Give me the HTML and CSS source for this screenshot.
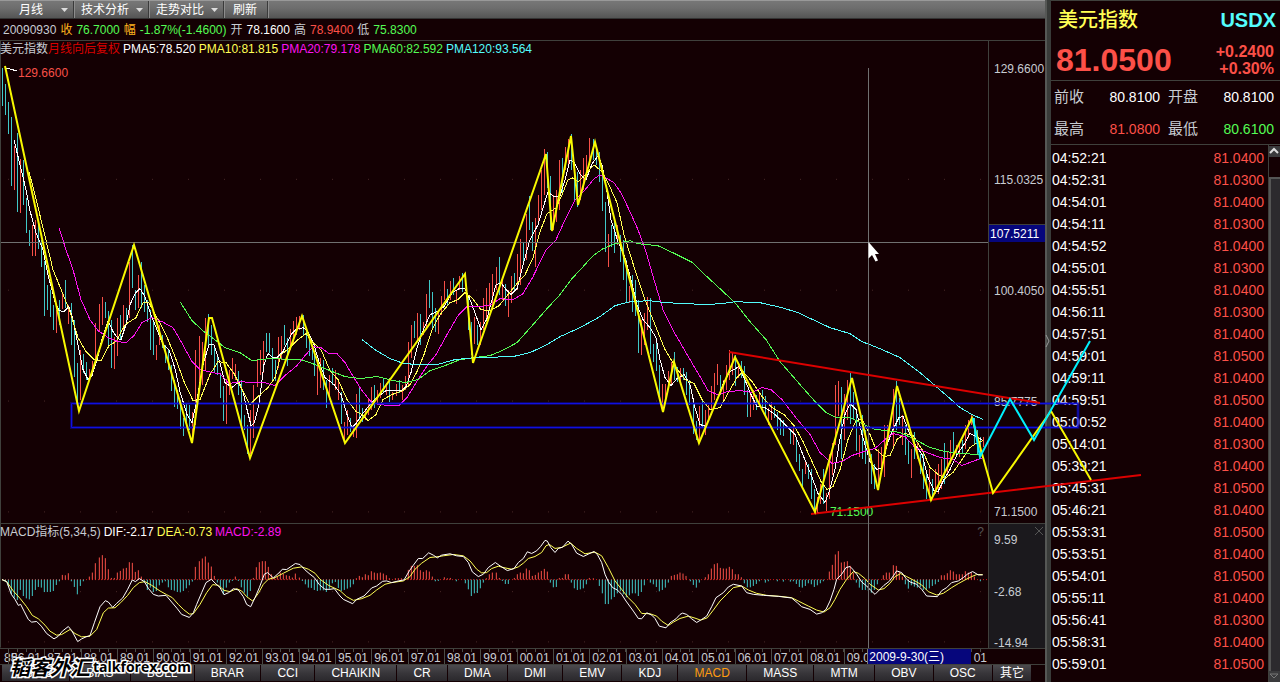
FILE: index.html
```html
<!DOCTYPE html>
<html lang="zh-CN">
<head>
<meta charset="utf-8">
<title>美元指数 USDX</title>
<link rel="stylesheet" href="styles.css">
</head>
<body>
<div class="app">
  <main class="main">
    <nav class="toolbar">
      <button class="tool tool-period" type="button">月线<svg class="caret" viewBox="0 0 7 4"><path d="M0 0H7L3.500 4Z"/></svg></button>
      <button class="tool" type="button">技术分析<svg class="caret" viewBox="0 0 7 4"><path d="M0 0H7L3.500 4Z"/></svg></button>
      <button class="tool" type="button">走势对比<svg class="caret" viewBox="0 0 7 4"><path d="M0 0H7L3.500 4Z"/></svg></button>
      <button class="tool" type="button">刷新</button>
    </nav>
    <div class="info">
      <span class="silver">20090930</span><span class="gold">收</span><span class="green">76.7000</span><span class="gold">幅</span><span class="green">-1.87%(-1.4600)</span><span class="silver">开</span><span class="white">78.1600</span><span class="silver">高</span><span class="red">78.9400</span><span class="silver">低</span><span class="green">75.8300</span>
    </div>
    <section class="pane price-pane">
      <div class="plot">
        <svg class="canvas" viewBox="0 41 988 483" preserveAspectRatio="none">
          <g class="dots"><path d="M8 179.500H988M8 290.500H988M8 401.500H988M8 512.500H988"/></g>
          <path class="edge" d="M.5 41V524"/>
          <path class="bar down" d="M2.500 68V106M5.500 84V115M8.500 102V134M11.500 117V186M17.500 133V212M23.500 160V205M26.500 198V233M29.500 230V246M38.500 225V249M41.500 240V267M44.500 261V316M47.500 285V310M50.500 290V317M53.500 305V330M59.500 300V325M65.500 280V308M71.500 303V345M74.500 320V377M77.500 363V402M83.500 354V373M86.500 362V380M105.500 302V318M108.500 311V348M111.500 320V368M120.500 315V340M126.500 308V325M132.500 245V288M135.500 290V310M141.500 262V308M144.500 285V312M147.500 300V322M150.500 310V350M153.500 320V355M162.500 335V348M165.500 345V363M168.500 350V370M171.500 365V391M174.500 380V407M177.500 390V409M180.500 400V429M183.500 418V436M186.500 403V422M189.500 405V430M208.500 314V345M211.500 325V355M214.500 345V372M217.500 354V375M220.500 375V398M223.500 386V421M238.500 371V395M241.500 380V425M244.500 415V430M247.500 425V455M266.500 333V352M269.500 333V353M272.500 348V380M275.500 360V381M284.500 325V345M287.500 338V366M303.500 315V335M306.500 330V348M309.500 335V356M312.500 348V360M314.500 353V376M323.500 360V390M326.500 380V408M332.500 368V385M341.500 392V424M350.500 418V432M359.500 388V420M362.500 408V422M374.500 385V408M383.500 378V392M389.500 378V402M399.500 380V393M414.500 321V338M420.500 314V345M429.500 280V308M432.500 292V330M435.500 308V332M447.500 289V305M453.500 278V295M462.500 273V292M468.500 295V330M471.500 322V355M477.500 325V345M499.500 257V295M505.500 284V306M514.500 273V290M523.500 243V265M529.500 196V230M532.500 222V251M547.500 152V188M550.500 176V230M562.500 158V195M571.500 134V170M574.500 163V200M577.500 172V207M593.500 139V160M596.500 148V165M599.500 152V182M602.500 165V211M605.500 202V252M611.500 225V247M614.500 222V253M620.500 235V262M623.500 240V280M626.500 260V303M632.500 275V312M635.500 280V316M638.500 300V353M650.500 298V354M653.500 344V362M656.500 338V371M659.500 365V398M674.500 352V380M677.500 367V382M683.500 368V380M686.500 372V395M689.500 380V405M693.500 400V434M696.500 421V440M702.500 400V428M720.500 375V395M735.500 355V386M741.500 361V378M744.500 366V395M747.500 390V417M756.500 395V410M762.500 390V408M765.500 396V415M774.500 406V418M777.500 412V430M780.500 418V435M783.500 420V436M790.500 430V444M796.500 440V463M799.500 455V472M802.500 470V488M808.500 465V480M811.500 470V500M814.500 490V512M823.500 470V505M841.500 387V460M850.500 373V424M853.500 392V420M856.500 410V452M862.500 415V460M865.500 430V465M871.500 455V485M874.500 465V490M896.500 381V430M899.500 398V425M905.500 425V456M908.500 440V465M914.500 432V460M920.500 455V475M923.500 455V490M926.500 473V500M932.500 480V497M944.500 443V485M953.500 432V455M962.500 440V455M974.500 418V445M977.500 430V455M980.500 437V455"/>
          <path class="bar up" d="M14.500 146V190M20.500 159V213M32.500 225V256M35.500 220V256M56.500 310V333M62.500 292V309M68.500 305V324M80.500 350V400M89.500 369V378M92.500 361V372M95.500 323V365M99.500 304V331M102.500 297V325M114.500 337V369M117.500 318V356M123.500 305V333M129.500 262V318M138.500 275V308M156.500 345V360M159.500 325V345M192.500 412V440M195.500 350V425M199.500 336V390M202.500 342V385M205.500 318V370M226.500 379V424M229.500 370V395M232.500 358V379M235.500 364V380M250.500 410V455M253.500 385V438M257.500 360V387M260.500 350V375M263.500 341V373M278.500 337V368M281.500 336V360M290.500 329V350M293.500 321V345M296.500 317V335M299.500 316V330M317.500 360V395M320.500 358V388M329.500 375V400M335.500 370V390M338.500 382V400M344.500 422V440M347.500 410V435M353.500 425V437M356.500 394V438M365.500 410V420M368.500 398V415M371.500 387V410M377.500 390V405M380.500 383V398M386.500 383V395M392.500 392V400M396.500 384V396M402.500 385V400M405.500 376V390M408.500 342V385M411.500 325V358M417.500 313V340M423.500 322V335M426.500 294V330M438.500 310V334M441.500 296V315M444.500 281V300M450.500 281V300M456.500 290V304M459.500 276V290M474.500 317V344M480.500 322V345M483.500 298V330M486.500 288V320M489.500 283V310M492.500 274V305M496.500 267V290M502.500 280V300M508.500 290V317M511.500 276V303M517.500 254V290M520.500 239V285M526.500 214V260M535.500 218V267M538.500 195V225M541.500 170V210M544.500 149V195M553.500 195V230M556.500 190V222M559.500 160V210M565.500 147V170M568.500 139V165M580.500 170V200M583.500 158V190M586.500 155V180M589.500 138V165M608.500 234V267M617.500 225V245M629.500 286V303M641.500 320V355M644.500 313V345M647.500 297V330M662.500 384V410M665.500 384V400M668.500 371V388M671.500 362V385M680.500 368V385M699.500 406V440M705.500 410V435M708.500 405V420M711.500 386V410M714.500 373V400M717.500 364V385M723.500 380V400M726.500 365V390M729.500 350V380M732.500 353V375M738.500 365V378M750.500 392V417M753.500 390V410M759.500 394V405M768.500 408V425M771.500 402V420M793.500 425V445M805.500 462V475M817.500 498V515M820.500 485V505M826.500 494V512M829.500 455V500M832.500 443V476M835.500 385V445M838.500 381V416M844.500 394V440M847.500 380V420M859.500 435V458M878.500 450V485M881.500 448V470M884.500 425V478M887.500 425V446M893.500 389V450M902.500 415V445M911.500 450V479M917.500 443V460M929.500 470V498M935.500 470V495M938.500 465V495M941.500 460V490M947.500 452V475M950.500 440V465M956.500 445V458M959.500 443V458M965.500 425V450M968.500 420V438M971.500 415V425M983.500 437V448"/>
          <polyline class="line s-white" points="14,140 20,165 26,190 30,211 36,233 43,250 48,275 55,302 59,311 64,312 69,307 73,320 79,350 83,370 88,380 92,376 97,360 103,336 108,321 113,332 118,339 121,340 126,325 130,305 135,294 140,289 145,297 151,315 157,330 163,345 169,350 175,369 180,392 187,415 192,423 197,400 203,365 209,345 214,345 219,360 225,383 232,388 239,382 243,392 247,410 251,426 254,424 259,405 264,365 268,354 273,358 277,358 283,352 291,335 296,330 303,328 307,331 313,342 319,362 325,378 334,385 341,395 347,415 352,428 356,424 362,415 370,405 378,397 386,391 395,391 402,391 406,387 411,373 417,348 423,331 430,315 437,312 444,307 452,293 459,289 465,289 470,300 476,316 481,330 487,319 492,300 496,285 501,283 506,290 511,295 517,289 523,265 530,240 538,225 544,205 548,192 554,197 560,196 565,180 570,160 574,162 580,174 586,180 592,164 598,156 602,165 606,185 611,220 618,242 625,258 631,280 637,305 643,320 650,328 656,338 660,360 665,378 671,386 677,379 684,375 690,385 695,408 700,425 706,427 711,415 717,400 724,382 730,372 739,367 744,378 751,395 757,407 765,408 775,415 785,425 795,435 802,453 811,475 818,494 825,503 830,490 835,470 839,445 845,415 850,404 856,410 862,435 870,462 877,470 882,468 887,445 893,430 899,418 903,417 908,430 915,445 922,455 928,478 934,491 938,492 944,480 950,470 957,455 964,445 970,434 976,437 983,441"/>
          <polyline class="line s-yellow" points="29,172 35,195 43,228 53,270 62,292 70,312 78,338 86,352 94,360 101,361 109,346 116,342 125,325 136,318 143,303 149,303 157,318 166,335 175,357 184,382 193,401 200,400 210,375 218,362 226,363 234,374 241,388 250,405 258,397 268,388 275,378 281,355 290,348 298,340 306,334 313,343 321,350 330,371 338,380 347,400 356,412 362,415 368,421 376,415 383,400 392,395 403,391 410,385 417,372 424,355 432,330 440,315 450,303 458,300 465,293 472,298 481,310 490,311 499,306 508,295 516,285 525,275 533,258 540,232 547,214 556,208 562,195 568,180 573,178 578,182 585,175 594,165 602,172 609,185 617,203 624,235 634,267 645,300 655,325 665,350 674,365 685,380 694,384 702,400 710,410 720,408 729,392 737,378 743,372 752,382 762,397 772,408 784,415 794,426 803,442 812,462 821,482 827,490 833,487 840,470 848,440 856,421 862,420 870,435 876,450 884,457 890,456 897,440 905,434 913,436 922,450 930,468 938,475 945,479 953,473 962,460 970,448 976,444 983,441"/>
          <polyline class="line s-magenta" points="59,228 66,250 73,270 81,300 90,320 98,331 108,338 118,342 126,343 134,336 142,323 152,318 162,322 173,328 180,340 192,362 200,370 212,373 220,374 229,384 240,382 252,383 264,383 275,386 285,376 297,366 305,356 313,347 321,348 329,354 337,354 345,363 352,375 362,391 371,402 379,405 390,406 399,406 407,398 418,380 428,365 436,355 447,335 458,316 467,307 480,307 491,305 500,299 513,300 523,294 533,277 546,250 556,240 565,220 575,200 585,190 594,179 600,175 606,178 614,183 621,193 630,212 638,230 646,252 654,280 663,310 675,334 690,360 700,377 708,391 717,395 728,392 741,391 752,393 762,388 771,390 782,400 795,417 810,435 820,453 832,464 842,462 852,456 864,452 875,449 885,440 893,434 905,437 915,448 927,453 940,458 953,460 962,466 970,463 983,458"/>
          <polyline class="line s-green" points="180,302 192,321 204,332 216,341 225,348 240,353 252,361 270,359 300,360 310,363 330,371 345,377 360,379 377,377 393,381 405,383 418,380 430,371 445,366 460,360 475,358 490,356 502,351 517,343 533,325 547,309 560,295 571,280 583,267 593,256 603,249 615,244 630,241 638,244 658,246 675,254 693,263 707,277 720,289 735,303 750,322 766,340 780,362 800,385 815,402 826,413 836,418 850,418 862,424 875,430 887,431 900,433 915,440 930,448 945,452 960,454 980,455"/>
          <polyline class="line s-cyan" points="362,340 375,350 390,359 404,364 420,365 437,365 455,360 475,358 513,357 530,353 545,346 560,337 580,328 600,317 615,306 630,302 650,301 665,303 690,304 702,305 722,304 735,302 760,303 782,308 798,313 815,321 830,328 850,334 862,342 880,349 900,358 920,373 935,386 950,399 960,408 972,415 983,420"/>
          <path class="line s-white" d="M6 68L17 71M817 513L827 513"/>
        </svg>
        <header class="legend">
          <span class="silver">美元指数<span class="crimson">月线向后复权</span></span><span class="white">PMA5:78.520</span><span class="yellow">PMA10:81.815</span><span class="magenta">PMA20:79.178</span><span class="green">PMA60:82.592</span><span class="cyan">PMA120:93.564</span>
        </header>
        <span class="mark mark-high">129.6600</span>
        <span class="mark mark-low">71.1500</span>
      </div>
      <div class="scale price-scale">
        <span>129.6600</span><span>115.0325</span><span>100.4050</span><span>85.7775</span><span>71.1500</span>
        <span class="scale-tag">107.5211</span>
      </div>
    </section>
    <section class="pane macd-pane">
      <div class="plot">
        <svg class="canvas" viewBox="0 15 2964 369" preserveAspectRatio="none">
          <g class="dots"><path d="M24 217H2964M24 367H2964"/></g>
          <path class="edge" d="M1.500 15V384"/>
          <path class="zero" d="M6 181H2964"/>
          <path class="bar down" d="M16 181V187M25 181V200M34 181V225M43 181V235M52 181V242M61 181V212M70 181V230M79 181V237M88 181V240M97 181V230M106 181V212M115 181V203M124 181V205M133 181V218M142 181V218M151 181V218M160 181V215M169 181V197M178 181V186M214 181V186M223 181V203M232 181V225M241 181V200M250 181V186M433 181V190M442 181V212M451 181V205M460 181V218M469 181V215M478 181V198M487 181V190M496 181V186M505 181V204M514 181V212M523 181V214M532 181V218M541 181V219M550 181V215M559 181V207M568 181V198M577 181V187M652 181V190M661 181V203M670 181V225M679 181V205M688 181V190M697 181V185M715 181V185M724 181V204M733 181V220M742 181V232M751 181V215M907 181V185M916 181V195M925 181V205M934 181V206M943 181V212M952 181V215M961 181V213M970 181V213M979 181V218M988 181V208M997 181V192M1006 181V188M1015 181V206"/>
          <path class="bar up" d="M187 181V167M196 181V168M205 181V162M268 181V172M277 181V160M286 181V132M298 181V115M307 181V108M316 181V117M325 181V150M334 181V176M343 181V176M352 181V160M361 181V155M370 181V148M379 181V146M388 181V129M397 181V131M406 181V158M415 181V153M424 181V172M586 181V143M598 181V126M607 181V118M616 181V112M625 181V130M634 181V142M643 181V170M706 181V172M760 181V176M769 181V144M778 181V129M787 181V126M796 181V126M805 181V143M814 181V165M823 181V176M832 181V172M841 181V160M850 181V164M859 181V168M868 181V170M877 181V175M886 181V163M898 181V175"/>
          <polyline class="line s-yellow" points="6,181 20,187 40,215 60,237 80,262 97,288 115,298 135,317 150,335 170,347 185,345 210,330 225,342 245,352 270,350 290,330 310,280 325,266 345,265 362,250 383,228 400,205 418,190 435,187 455,198 480,215 500,226 517,235 535,255 550,270 568,284 580,283 600,255 620,220 638,196 655,198 672,213 690,217 710,208 725,215 740,232 758,245 775,222 790,195 805,180 825,175 850,162 880,147 905,143 925,150 945,162 960,180 985,198 1020,214"/>
          <polyline class="line s-white" points="6,181 20,187 34,225 45,240 55,258 62,255 72,275 85,300 95,308 110,306 124,320 140,342 162,358 175,350 187,335 205,321 215,333 233,366 245,358 258,352 270,348 283,310 300,262 316,244 325,248 338,264 350,252 368,236 383,210 397,182 406,187 418,178 433,187 445,207 460,225 475,230 498,228 515,248 532,268 545,285 568,294 580,280 590,255 605,220 618,190 634,180 648,194 660,205 672,226 686,220 700,208 715,212 730,232 740,255 752,262 765,235 778,205 793,165 803,160 820,176 840,158 847,150 860,151 886,133 900,136 915,152 930,165 943,175 958,196 975,210 990,210 1003,208 1020,230"/>
          <g transform="translate(1020 0)">
            <path class="bar down" d="M4 181V215M13 181V212M22 181V208M31 181V204M40 181V195M286 181V186M295 181V185M349 181V186M376 181V192M385 181V210M394 181V230M403 181V222M412 181V221M421 181V207M430 181V190M487 181V185M496 181V194M505 181V194M631 181V190M640 181V204M649 181V203M694 181V190M703 181V207M712 181V212M721 181V210M730 181V207M739 181V195M778 181V200M787 181V222M796 181V254M805 181V254M814 181V240M823 181V233M832 181V222M841 181V215M850 181V225M859 181V234M868 181V228M877 181V222M886 181V222M895 181V230M904 181V218M913 181V198M931 181V190M940 181V195M949 181V203M958 181V216M967 181V212M976 181V205M985 181V190"/>
            <path class="bar up" d="M49 181V177M58 181V170M67 181V174M76 181V165M85 181V168M94 181V156M103 181V160M112 181V162M121 181V160M130 181V163M139 181V168M148 181V177M166 181V177M175 181V177M184 181V177M205 181V152M214 181V140M223 181V140M232 181V138M241 181V153M250 181V158M259 181V153M268 181V157M277 181V172M313 181V174M322 181V177M331 181V176M439 181V177M448 181V165M457 181V160M469 181V160M478 181V176M523 181V176M532 181V165M541 181V160M550 181V162M559 181V148M568 181V153M577 181V170M586 181V167M595 181V160M604 181V155M613 181V149M622 181V157M658 181V176M667 181V176M676 181V165M685 181V165M748 181V176M760 181V177M994 181V170M1003 181V167M1012 181V165"/>
            <polyline class="line s-yellow" points="0,214 20,232 40,243 65,238 90,228 110,212 135,195 155,190 190,185 210,172 225,150 245,132 270,115 290,113 310,110 340,106 370,110 390,125 410,150 425,161 440,160 455,148 475,141 495,146 515,150 535,143 550,132 565,118 585,112 605,100 618,80 628,76 645,88 665,85 692,72 710,88 735,104 765,99 785,110 805,145 825,185 845,210 865,235 885,255 905,282 930,283 950,290 965,305 985,318 1000,308 1020,297"/>
            <polyline class="line s-white" points="0,230 10,240 38,253 50,240 72,230 95,206 110,200 128,186 140,185 155,190 175,185 192,182 208,155 220,138 235,118 248,118 266,101 280,108 292,116 305,108 330,104 350,110 370,112 385,130 397,158 415,172 430,165 445,145 466,130 480,140 502,154 522,148 535,130 550,118 562,98 575,103 590,95 602,82 615,64 622,66 632,85 645,100 655,88 668,84 684,66 695,76 710,102 730,112 745,105 762,97 772,106 785,130 795,165 805,187 818,205 832,212 845,225 858,245 880,275 895,297 905,298 920,280 935,287 945,297 958,320 978,325 990,310 1008,298 1020,285"/>
          </g>
          <g transform="translate(2040 0)">
            <path class="bar down" d="M31 181V186M40 181V197M49 181V205M58 181V190M193 181V192M202 181V204M211 181V204M220 181V200M229 181V194M238 181V186M256 181V190M265 181V186M292 181V186M310 181V187M331 181V187M340 181V186M349 181V194M358 181V203M367 181V205M376 181V200M385 181V192M394 181V195M403 181V203M412 181V198M421 181V192M430 181V186M529 181V190M538 181V205M547 181V212M556 181V212M565 181V215M574 181V220M583 181V212M592 181V195M676 181V195M685 181V208M694 181V198M703 181V202M712 181V205M721 181V203M730 181V212M739 181V212M748 181V207M757 181V200M766 181V195M775 181V188M901 181V186"/>
            <path class="bar up" d="M0 181V160M9 181V163M18 181V170M76 181V174M85 181V165M94 181V148M103 181V135M112 181V132M121 181V146M130 181V148M139 181V148M148 181V143M157 181V150M166 181V165M175 181V165M184 181V174M448 181V157M457 181V137M466 181V106M475 181V96M484 181V130M493 181V128M502 181V126M511 181V140M520 181V160M610 181V168M619 181V160M628 181V160M640 181V138M649 181V140M658 181V158M667 181V172M784 181V168M793 181V168M802 181V162M811 181V153M820 181V157M829 181V165M838 181V165M847 181V165M856 181V156M865 181V160M874 181V160M883 181V172"/>
            <polyline class="line s-yellow" points="0,297 25,290 45,296 62,302 82,295 100,272 120,245 140,225 160,205 185,200 205,212 230,222 260,228 300,231 335,235 355,245 385,260 410,272 432,278 450,265 465,240 480,210 500,180 520,157 535,162 555,178 570,195 595,212 612,208 630,192 645,172 662,163 680,172 705,185 725,197 745,217 770,227 790,222 815,205 835,193 855,182 875,172 890,166 908,166"/>
            <polyline class="line s-white" points="0,285 8,281 20,285 35,298 50,309 65,300 80,290 95,262 108,235 130,220 145,203 160,195 185,200 200,220 220,225 250,228 295,231 335,236 352,250 365,262 390,270 410,284 425,280 438,270 450,245 462,210 470,180 485,165 498,145 510,142 518,150 530,165 545,188 560,200 572,213 585,225 598,212 612,198 628,186 640,170 650,155 665,160 680,180 690,188 710,195 725,210 740,230 772,232 785,214 800,205 815,190 835,185 850,175 862,165 878,157 895,167 908,167"/>
          </g>
        </svg>
        <header class="legend">
          <span class="silver">MACD指标(5,34,5)</span><span class="white">DIF:-2.17</span><span class="yellow">DEA:-0.73</span><span class="magenta">MACD:-2.89</span>
          <button class="help" type="button">?</button>
        </header>
      </div>
      <div class="scale macd-scale">
        <span>9.59</span><span>-2.68</span><span>-14.94</span>
        <button class="close" type="button" aria-label="关闭"><svg viewBox="0 0 8 8"><path d="M0 0L8 8M8 0L0 8"/></svg></button>
      </div>
    </section>
    <div class="dates">
      <span class="date-edge">85</span>
      <div class="years">
        <span>86.01</span><span>87.01</span><span>88.01</span><span>89.01</span><span>90.01</span><span>91.01</span><span>92.01</span><span>93.01</span><span>94.01</span><span>95.01</span><span>96.01</span><span>97.01</span><span>98.01</span><span>99.01</span><span>00.01</span><span>01.01</span><span>02.01</span><span>03.01</span><span>04.01</span><span>05.01</span><span>06.01</span><span>07.01</span><span>08.01</span><span>09.0</span><span></span><span></span><span class="year-end">01</span>
      </div>
      <span class="date-tag">2009-9-30(三)</span>
    </div>
    <nav class="tabs">
      <button type="button">B3612</button><button type="button">BIAS</button><button type="button">BOLL</button><button type="button">BRAR</button><button type="button">CCI</button><button type="button">CHAIKIN</button><button type="button">CR</button><button type="button">DMA</button><button type="button">DMI</button><button type="button">EMV</button><button type="button">KDJ</button><button type="button" class="active">MACD</button><button type="button">MASS</button><button type="button">MTM</button><button type="button">OBV</button><button type="button">OSC</button><button type="button" class="more">其它</button>
    </nav>
  </main>
  <div class="splitter"><svg viewBox="0 0 5 12"><path d="M1 0L4 6L1 12"/></svg></div>
  <aside class="quote">
    <header class="quote-head">
      <h1>美元指数</h1><span class="code">USDX</span>
    </header>
    <div class="last">
      <strong>81.0500</strong>
      <div class="change"><span>+0.2400</span><span>+0.30%</span></div>
    </div>
    <dl class="facts">
      <dt>前收</dt><dd class="white">80.8100</dd><dt>开盘</dt><dd class="white">80.8100</dd>
      <dt>最高</dt><dd class="red">81.0800</dd><dt>最低</dt><dd class="green">80.6100</dd>
    </dl>
    <div class="ticks">
      <table>
        <tbody>
          <tr><td>04:52:21</td><td>81.0400</td></tr>
          <tr><td>04:52:31</td><td>81.0300</td></tr>
          <tr><td>04:54:01</td><td>81.0400</td></tr>
          <tr><td>04:54:11</td><td>81.0300</td></tr>
          <tr><td>04:54:52</td><td>81.0400</td></tr>
          <tr><td>04:55:01</td><td>81.0300</td></tr>
          <tr><td>04:55:51</td><td>81.0400</td></tr>
          <tr><td>04:56:11</td><td>81.0300</td></tr>
          <tr><td>04:57:51</td><td>81.0400</td></tr>
          <tr><td>04:59:01</td><td>81.0500</td></tr>
          <tr><td>04:59:11</td><td>81.0400</td></tr>
          <tr><td>04:59:51</td><td>81.0500</td></tr>
          <tr><td>05:00:52</td><td>81.0400</td></tr>
          <tr><td>05:14:01</td><td>81.0300</td></tr>
          <tr><td>05:39:21</td><td>81.0400</td></tr>
          <tr><td>05:45:31</td><td>81.0500</td></tr>
          <tr><td>05:46:21</td><td>81.0400</td></tr>
          <tr><td>05:53:31</td><td>81.0500</td></tr>
          <tr><td>05:53:51</td><td>81.0400</td></tr>
          <tr><td>05:54:01</td><td>81.0500</td></tr>
          <tr><td>05:55:11</td><td>81.0400</td></tr>
          <tr><td>05:56:41</td><td>81.0300</td></tr>
          <tr><td>05:58:31</td><td>81.0400</td></tr>
          <tr><td>05:59:01</td><td>81.0500</td></tr>
        </tbody>
      </table>
      <div class="scrollbar">
        <button type="button" aria-label="向上"><svg viewBox="0 0 10 10"><path d="M1 7L5 3L9 7"/></svg></button>
        <div class="thumb"></div>
        <button type="button" class="dim" aria-label="向下"><svg viewBox="0 0 10 10"><path d="M1 3L5 7L9 3Z"/></svg></button>
      </div>
    </div>
  </aside>
  <svg class="overlay" viewBox="0 0 1280 682" preserveAspectRatio="none">
    <path class="cross" d="M1 242.500H988M868.500 68V648"/>
    <path class="band-glow" d="M71.500 403.500H1078V427.500H71.500Z"/>
    <path class="band" d="M71.500 403.500H1078V427.500H71.500Z"/>
    <path class="trend" d="M729 352L1040 403M811 514L1141 475"/>
    <polyline class="wave" points="5,66 79,411 134,245 192,443 209,318 212,318 250,458 302,316 345,443 465,274 473,363 546,154 552,231 571,136 578,205 595,142 663,412 674,362 699,443 735,357 815,512 852,378 878,490 897,386 931,500 972,418 993,493 1051,411 1091,480"/>
    <polyline class="wave forecast" points="973,418 980,457 1010,399 1034,440 1090,341"/>
    <path class="pointer" d="M868.500 242V258.500L872 255L875.500 261.500L878 260.500L875 254H879Z"/>
  </svg>
  <div class="watermark"><span class="wm-name">韬客外汇</span><span class="wm-site">talkforex.com</span></div>
</div>
</body>
</html>
```
FILE: styles.css
```css
* { box-sizing: border-box; margin: 0; padding: 0; }

body {
  background: #140003;
  color: #c8ccd2;
  font: 12px/16px "Liberation Sans", Arial, "Noto Sans CJK SC", sans-serif;
}

button { border: 0; background: none; color: inherit; font: inherit; }

.silver { color: #c8ccd2; }
.white { color: #fff; }
.gold { color: #ffb41e; }
.green { color: #54fc54; }
.red { color: #fc5048; }
.crimson { color: #d80000; }
.yellow { color: #ffff54; }
.magenta { color: #fc14f0; }
.cyan { color: #54fcfc; }

.app { position: relative; display: flex; height: 100vh; overflow: hidden; }
.main { flex: 1; min-width: 0; display: flex; flex-direction: column; }

.toolbar {
  display: flex;
  height: 19px;
  background: linear-gradient(#777, #6e6e6e 40%, #555);
  border-top: 1px solid #999;
  border-bottom: 1px solid #333;
  color: #fff;
}
.tool {
  display: flex;
  align-items: center;
  gap: 7px;
  padding: 0 5px 0 7px;
  border-right: 1px solid #3a3a3a;
  box-shadow: 1px 0 #8c8c8c;
  white-space: nowrap;
}
.tool:last-child { padding: 0 10px 0 9px; }
.tool-period { width: 74px; padding-left: 19px; justify-content: space-between; }
.caret { width: 7px; height: 4px; fill: #ddd; }

.info {
  display: flex;
  align-items: center;
  gap: 4px;
  height: 22px;
  padding-left: 3px;
  border-bottom: 1px solid #3f403c;
  white-space: nowrap;
}

.pane { display: flex; border-bottom: 1px solid #3f403c; min-height: 0; }
.price-pane { flex: 484; }
.macd-pane { flex: 124; }
.plot { position: relative; flex: 1; min-width: 0; }
.canvas { position: absolute; inset: 0; width: 100%; height: 100%; }
.canvas path, .canvas polyline { fill: none; vector-effect: non-scaling-stroke; }
.bar { stroke-width: 1; shape-rendering: crispEdges; }
.down { stroke: #40c8c8; }
.up { stroke: #f85048; }
.edge { stroke: #3f403c; }
.zero { stroke: #c81818; stroke-dasharray: 1 2; shape-rendering: crispEdges; }
.dots path { stroke: #482828; stroke-dasharray: 1 35; }
.line { stroke-width: 1; shape-rendering: crispEdges; }
.s-white { stroke: #fff; }
.s-yellow { stroke: #ffff54; }
.s-magenta { stroke: #fc14f0; }
.s-green { stroke: #54fc54; }
.s-cyan { stroke: #54fcfc; }

.legend { position: relative; display: flex; gap: 3px; white-space: nowrap; }
.help { margin-left: auto; padding-right: 4px; color: #555; font-size: 12px; }
.mark { position: absolute; line-height: 16px; }
.mark-high { left: 18px; top: 24px; color: #f85048; }
.mark-low { left: 84%; bottom: 3px; color: #54fc54; }

.scale {
  position: relative;
  display: flex;
  flex-direction: column;
  justify-content: space-between;
  width: 57px;
  padding-left: 5px;
  border-left: 1px solid #3f403c;
  overflow: hidden;
}
.price-scale { padding-top: 20px; padding-bottom: 3px; }
.macd-scale { padding-top: 9px; background: #1b191d; line-height: 15px; }
.macd-scale span:nth-child(3) { margin-bottom: -3px; }
.scale-tag {
  position: absolute;
  left: 0;
  right: 0;
  top: 38%;
  height: 18px;
  padding-left: 1px;
  background: #06067c;
  border-top: 1px solid #3f403c;
  color: #fff;
  line-height: 18px;
}
.close { position: absolute; top: 3px; right: 2px; width: 8px; height: 8px; display: flex; }
.close svg { width: 8px; height: 8px; fill: none; stroke: #555; }

.dates { position: relative; display: flex; height: 16px; border-bottom: 1px solid #3f403c; overflow: hidden; }
.date-edge { width: 8px; padding-left: 4px; line-height: 18px; }
.years { flex: 1; display: grid; grid-template-columns: repeat(27, 1fr); margin-right: 56px; }
.years span {
  min-width: 0;
  padding-left: 2px;
  border-left: 1px solid #4a4b47;
  background: repeating-linear-gradient(90deg, transparent 0 8px, #4a4b47 8px 9px) 0 0 / 100% 3px no-repeat;
  line-height: 18px;
}
.years .year-end { padding-right: 2px; text-align: right; }
.date-tag {
  position: absolute;
  left: 83%;
  width: 104px;
  height: 16px;
  padding-left: 1px;
  background: #06067c;
  border-left: 1px solid #777;
  color: #fff;
  line-height: 16px;
  white-space: nowrap;
}

.tabs { display: flex; height: 17px; padding: 0 13px 1px 2px; color: #fff; }
.tabs button {
  flex: 1 0 auto;
  padding: 0 16px;
  border-right: 1px solid #140003;
  background: linear-gradient(#4c4a4e, #38363a 50%, #2a282c);
  line-height: 16px;
  white-space: nowrap;
}
.tabs .active { color: #ff9c10; }
.tabs .more { flex-grow: 0; padding: 0 7px; }

.splitter {
  display: flex;
  align-items: center;
  width: 6px;
  background: linear-gradient(90deg, #555755 0 2px, #393b39 2px);
}
.splitter svg { width: 5px; height: 12px; fill: none; stroke: #999; }

.quote {
  display: flex;
  flex-direction: column;
  width: 229px;
  border-top: 1px solid #3f403c;
  font-size: 14px;
}
.quote-head { display: flex; justify-content: space-between; align-items: center; height: 38px; padding: 0 4px 0 7px; }
.quote-head h1 { color: #ffff54; font-size: 20px; line-height: 24px; font-weight: 500; }
.code { color: #54fcfc; font-size: 20px; font-weight: 700; }
.last {
  display: flex;
  justify-content: space-between;
  align-items: center;
  height: 42px;
  padding: 0 6px 0 5px;
  border-bottom: 1px solid #3f403c;
  color: #fc5048;
}
.last strong { font-size: 32px; line-height: 36px; }
.change { display: flex; flex-direction: column; align-items: flex-end; font-size: 16px; font-weight: 700; line-height: 17px; }
.facts {
  display: grid;
  grid-template-columns: 34px 1fr 38px 1fr;
  grid-auto-rows: 32px;
  align-items: center;
  height: 64px;
  padding: 0 6px 0 3px;
  border-bottom: 1px solid #3f403c;
}
.facts dt { font-size: 15px; }
.facts dd { text-align: right; }
.facts dt:nth-of-type(even) { padding-left: 6px; }
.facts dd:nth-of-type(odd) { padding-right: 2px; }
.ticks { flex: 1; display: flex; min-height: 0; }
.ticks table { flex: 1; align-self: flex-start; margin-top: 2px; border-collapse: collapse; }
.ticks tr { height: 22px; }
.ticks td { padding-left: 1px; color: #fff; }
.ticks td:last-child { padding-right: 4px; color: #fc5048; text-align: right; }
.scrollbar { display: flex; flex-direction: column; width: 12px; padding-top: 1px; border-left: 1px solid #3f403c; }
.scrollbar button { display: flex; height: 11px; background: #3a3a3c; }
.scrollbar svg { width: 10px; height: 10px; fill: none; stroke: #ddd; stroke-width: 2; }
.scrollbar .dim svg { stroke: #777; stroke-width: 1; }
.thumb { flex: 1; margin-top: 20px; background: #2c2a2e; border: 1px solid #555; border-width: 2px 0 0 2px; }

.overlay { position: absolute; inset: 0; width: 100%; height: 100%; fill: none; pointer-events: none; }
.cross { stroke: #707070; shape-rendering: crispEdges; }
.band-glow { stroke: #0808d0; stroke-width: 3; opacity: .45; }
.band { stroke: #1010e0; stroke-width: 1; }
.trend { stroke: #dc0000; stroke-width: 2; }
.wave { stroke: #f8f800; stroke-width: 2; }
.forecast { stroke: #00f0fc; stroke-width: 2; }
.pointer { fill: #fff; }

.watermark {
  position: absolute;
  left: 10px;
  bottom: 3px;
  display: flex;
  align-items: center;
  gap: 3px;
  color: #000;
  font-weight: 700;
  white-space: nowrap;
  -webkit-text-stroke: 3px #fff;
  paint-order: stroke fill;
}
.wm-name { font-family: "Noto Sans CJK SC", sans-serif; font-size: 20px; line-height: 24px; font-style: italic; }
.wm-site { font-family: "Open Sans", sans-serif; font-size: 14px; }
```
